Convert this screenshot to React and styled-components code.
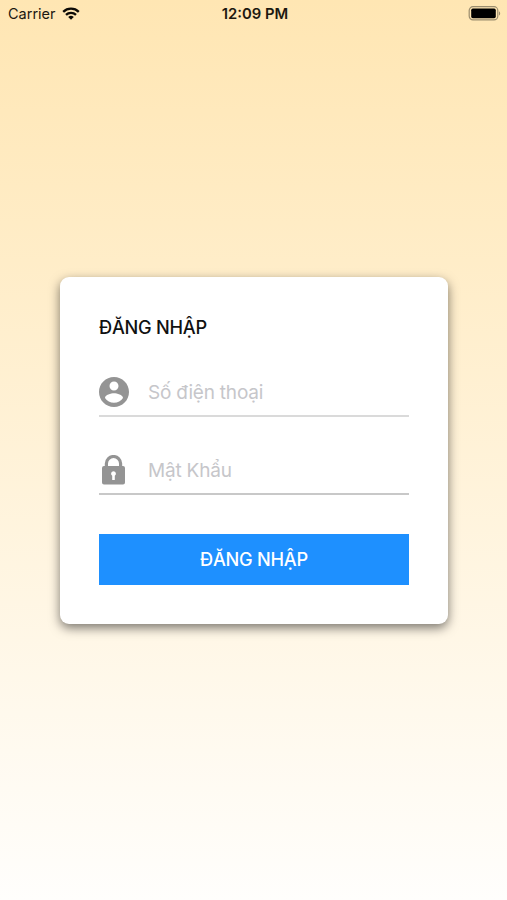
import { useState } from "react";
import styled, { createGlobalStyle } from "styled-components";

export default function Login() {
  const [phone, setPhone] = useState("");
  const [password, setPassword] = useState("");

  const onSubmit = (e) => {
    e.preventDefault();
  };

  return (
    <Screen>
      <GlobalStyle />
      <StatusBar>
        <Carrier>
          <span>Carrier</span>
          <WifiIcon />
        </Carrier>
        <Clock>12:09 PM</Clock>
        <BatteryIcon />
      </StatusBar>
      <Card onSubmit={onSubmit}>
        <Title>ĐĂNG NHẬP</Title>
        <Field $line="#dadada">
          <AccountIcon />
          <Input
            type="text"
            placeholder="Số điện thoại"
            value={phone}
            onChange={(e) => setPhone(e.target.value)}
          />
        </Field>
        <Field $line="#c8c8c8">
          <LockIcon />
          <Input
            type="password"
            placeholder="Mật Khẩu"
            value={password}
            onChange={(e) => setPassword(e.target.value)}
          />
        </Field>
        <Button type="submit">ĐĂNG NHẬP</Button>
      </Card>
    </Screen>
  );
}

function WifiIcon() {
  return (
    <svg width="18" height="13" viewBox="0 0 18 13">
      <g fill="none" stroke="#0c0a06" strokeWidth="2.3">
        <path d="M1.2 4.8a11.2 11.2 0 0 1 15.6 0" />
        <path d="M4 7.9a7.1 7.1 0 0 1 10 0" />
      </g>
      <path fill="#0c0a06" d="M9 12.8 6.2 10a4 4 0 0 1 5.6 0z" />
    </svg>
  );
}

function BatteryIcon() {
  return (
    <svg width="33" height="15" viewBox="0 0 33 15">
      <rect
        x="1.2"
        y="0.7"
        width="28.6"
        height="13.2"
        rx="3.8"
        fill="none"
        stroke="#9b8d6e"
        strokeWidth="1.2"
      />
      <rect x="3.2" y="2.6" width="24.6" height="9.6" rx="1.6" fill="#000" />
      <path fill="#9b8d6e" d="M31 5.2c1.6.8 1.6 3.6 0 4.4z" />
    </svg>
  );
}

function AccountIcon() {
  return (
    <svg width="30" height="30" viewBox="2 2 20 20">
      <path
        fill="#949494"
        d="M12 2C6.48 2 2 6.48 2 12s4.48 10 10 10 10-4.48 10-10S17.52 2 12 2zm0 3c1.66 0 3 1.34 3 3s-1.34 3-3 3-3-1.34-3-3 1.34-3 3-3zm0 14.2c-2.5 0-4.71-1.28-6-3.22.03-1.99 4-3.08 6-3.08 1.99 0 5.97 1.09 6 3.08-1.29 1.94-3.5 3.22-6 3.22z"
      />
    </svg>
  );
}

function LockIcon() {
  return (
    <svg width="30" height="30" viewBox="0 0 30 30">
      <path
        fill="none"
        stroke="#949494"
        strokeWidth="3.2"
        d="M7.4 13V8.6a7.1 7.1 0 0 1 14.2 0V13"
      />
      <path
        fill="#949494"
        fillRule="evenodd"
        d="M5 11h19a2 2 0 0 1 2 2v14.5a2 2 0 0 1-2 2H5a2 2 0 0 1-2-2V13a2 2 0 0 1 2-2zM14.500 16.200a2.500 2.500 0 0 0-1.300 4.600v4.200h2.600v-4.200a2.500 2.500 0 0 0-1.300-4.600z"
      />
    </svg>
  );
}

const GlobalStyle = createGlobalStyle`
  * {
    box-sizing: border-box;
  }
  body {
    margin: 0;
    font-family: Inter, "Liberation Sans", sans-serif;
  }
`;

const Screen = styled.div`
  display: flex;
  flex-direction: column;
  width: 100%;
  height: 100vh;
  background: linear-gradient(#ffe6b3, #fffefc);
`;

const StatusBar = styled.div`
  display: grid;
  grid-template-columns: 1fr auto 1fr;
  align-items: center;
  height: 27px;
  padding: 0 6px 0 8px;
  color: #1c1810;
  font-size: 14.5px;

  > svg {
    justify-self: end;
  }
`;

const Carrier = styled.div`
  display: flex;
  align-items: center;
  gap: 6px;
`;

const Clock = styled.div`
  padding-left: 1px;
  font-size: 14.8px;
  font-weight: 600;
`;

const Card = styled.form`
  display: flex;
  flex-direction: column;
  width: 388px;
  height: 347px;
  margin: 250px 0 0 60px;
  padding: 38px 39px 39px;
  border-radius: 9px;
  background: #fff;
  box-shadow: 0 4px 11px rgba(0, 0, 0, 0.52);
`;

const Title = styled.h1`
  margin: 0 0 28px;
  color: #111;
  font-size: 18.2px;
  font-weight: 500;
  letter-spacing: -0.25px;
  line-height: 24px;
`;

const Field = styled.label`
  display: flex;
  align-items: center;
  gap: 19px;
  height: 49.5px;
  margin-bottom: 28.5px;
  padding-top: 2px;
  border-bottom: 2px solid ${(props) => props.$line};
`;

const Input = styled.input`
  flex: 1;
  min-width: 0;
  padding: 1px 0 0;
  border: 0;
  outline: 0;
  background: transparent;
  color: #111;
  font-family: inherit;
  font-size: 19px;
  letter-spacing: -0.2px;

  &::placeholder {
    color: #c6c6ca;
  }
`;

const Button = styled.button`
  height: 51.5px;
  margin-top: auto;
  border: 0;
  background: #1e90ff;
  color: #fff;
  font-family: inherit;
  font-size: 18.2px;
  font-weight: 500;
  letter-spacing: -0.25px;
`;
